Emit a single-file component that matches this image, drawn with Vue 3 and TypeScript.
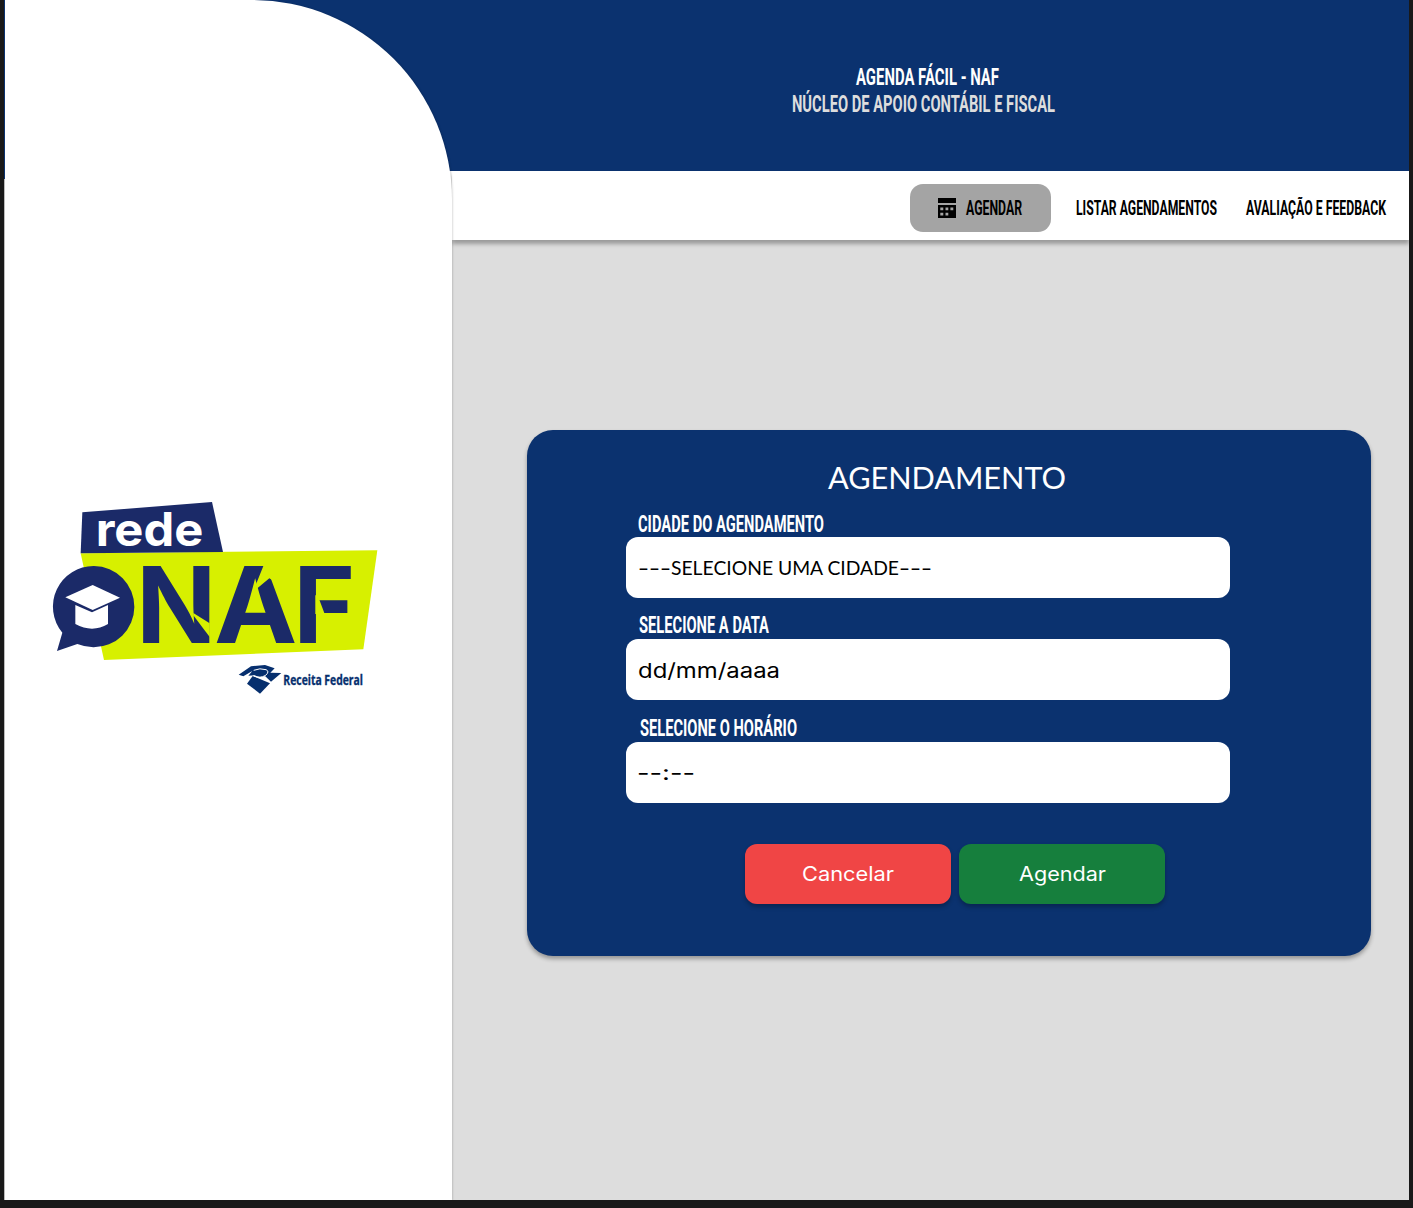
<script setup lang="ts">
import { h, ref } from 'vue'
import type { FunctionalComponent } from 'vue'

interface FitProps {
  text: string
  w: number
  cap: number
  size: number
}

// Single line of text whose box is exactly its cap height and fitted width.
const FitText: FunctionalComponent<FitProps> = (p) =>
  h('svg', { width: p.w, height: p.cap, style: { overflow: 'visible', display: 'block', flex: 'none' } }, [
    h('text', {
      x: 0,
      y: p.cap,
      'font-size': p.size,
      textLength: p.w,
      lengthAdjust: 'spacingAndGlyphs',
      fill: 'currentColor',
    }, p.text),
  ])
FitText.props = ['text', 'w', 'cap', 'size']

interface Part {
  text: string
  w: number
  size: number
  font: 'geo' | 'round'
}

interface Field {
  id: string
  label: string
  labelWidth: number
  parts: Part[]
}

const fields = ref<Field[]>([
  {
    id: 'cidade',
    label: 'CIDADE DO AGENDAMENTO',
    labelWidth: 186,
    parts: [
      { text: '---', w: 33, size: 19, font: 'geo' },
      { text: 'SELECIONE UMA CIDADE', w: 228, size: 19.8, font: 'round' },
      { text: '---', w: 33, size: 19, font: 'geo' },
    ],
  },
  { id: 'data', label: 'SELECIONE A DATA', labelWidth: 130, parts: [{ text: 'dd/mm/aaaa', w: 142, size: 20.4, font: 'geo' }] },
  { id: 'horario', label: 'SELECIONE O HORÁRIO', labelWidth: 157, parts: [{ text: '--:--', w: 58, size: 20.4, font: 'geo' }] },
])
</script>

<template>
  <div class="frame">
    <div class="window">
      <aside class="sidebar">
        <svg class="logo" width="350" height="220" viewBox="0 0 1050 660">
          <path fill="#d7f000" d="M122 190L1012 181L970 478L192 510Z" />
          <path fill="#1b2a68" d="M127 67L516 36L549 186L122 190Z" />
          <text class="rede" x="167" y="168" font-size="139" textLength="323" lengthAdjust="spacingAndGlyphs">rede</text>
          <path fill="#1b2a68" d="M162 228A122 122 0 1 1 160 472Q135 471 112 462L51 483L67 428A122 122 0 0 1 162 228Z" />
          <path fill="#fff" d="M76 322L158 285L240 323L158 360Z" />
          <path fill="#fff" d="M106 345L156 367L204 345V402Q157 430 106 402Z" />
          <g class="naf">
            <text x="289" y="458" textLength="240" lengthAdjust="spacingAndGlyphs">N</text>
            <text x="522" y="458" textLength="250" lengthAdjust="spacingAndGlyphs">A</text>
            <text x="760" y="458" textLength="186" lengthAdjust="spacingAndGlyphs">F</text>
          </g>
          <g fill="#d7f000">
            <path d="M460 369L509 400V441L460 376Z" />
            <path d="M671 226H705V275L688 265L652 295L640 303Z" />
            <path d="M826 316H833L854 372H826Z" />
          </g>
          <g fill="#062f6e">
            <path d="M596 554L633 529L675 525L704 535L691 548L724 549L693 575L675 558Q660 565 644 556L625 557L637 543L610 559Z" />
            <path d="M638 558L690 580L660 611L621 581Z" />
            <path d="M644 546Q659 536 676 546Q663 558 644 546Z" />
          </g>
          <path fill="none" stroke="#fff" stroke-width="3" d="M640 557Q658 567 677 556Q690 544 678 539Q660 533 641 541" />
          <text class="receita" x="730" y="584" font-size="40" textLength="239" lengthAdjust="spacingAndGlyphs">Receita Federal</text>
        </svg>
      </aside>

      <main class="main">
        <header class="header">
          <FitText class="display title" text="AGENDA FÁCIL - NAF" :w="143" :cap="16.5" :size="23.8" />
          <FitText class="display subtitle" text="NÚCLEO DE APOIO CONTÁBIL E FISCAL" :w="263" :cap="16.5" :size="23.8" />
        </header>

        <nav class="nav">
          <a class="nav-link active">
            <svg width="18" height="20" viewBox="0 0 18 20">
              <path
                fill="#000"
                fill-rule="evenodd"
                d="M0 0H18V5H0ZM0 7H18V20H0ZM2.3 9.6V12.2H5.3V9.6ZM7.5 9.6V12.2H10.3V9.6ZM12.4 9.6V12.2H15.3V9.6ZM2.3 14.7V17.4H5.3V14.7ZM7.5 14.7V17.4H10.3V14.7Z"
              />
            </svg>
            <FitText class="display" text="AGENDAR" :w="56" :cap="14" :size="19.8" />
          </a>
          <a class="nav-link"><FitText class="display" text="LISTAR AGENDAMENTOS" :w="141" :cap="14" :size="19.8" /></a>
          <a class="nav-link"><FitText class="display" text="AVALIAÇÃO E FEEDBACK" :w="140" :cap="14" :size="19.8" /></a>
        </nav>

        <section class="card">
          <FitText class="round heading" text="AGENDAMENTO" :w="238" :cap="22" :size="31.2" />
          <div class="fields">
            <div v-for="f in fields" :key="f.id" class="field" :class="f.id">
              <FitText class="display label" :text="f.label" :w="f.labelWidth" :cap="16.5" :size="23.8" />
              <div class="input">
                <FitText v-for="(p, i) in f.parts" :key="i" :class="p.font" :text="p.text" :w="p.w" :cap="14" :size="p.size" />
              </div>
            </div>
          </div>
          <div class="actions">
            <button type="button" class="btn cancel"><FitText class="geo" text="Cancelar" :w="92" :cap="14" :size="20" /></button>
            <button type="button" class="btn confirm"><FitText class="geo" text="Agendar" :w="87" :cap="14" :size="20" /></button>
          </div>
        </section>
      </main>
    </div>
  </div>
</template>

<style>
body {
  background: #191919;
}
</style>

<style scoped>
.frame {
  box-sizing: border-box;
  width: 1413px;
  height: 1208px;
  padding: 0 4px 8px;
  background: #191919;
  overflow: hidden;
}
.window {
  display: flex;
  width: 1405px;
  height: 1200px;
  overflow: hidden;
  background:
    linear-gradient(#0b326f 0 179px, #bbb 179px) 0 0 / 1px 100% no-repeat,
    linear-gradient(#0b326f 0 171px, #fff 171px 240px, #ddd 240px);
}
.sidebar {
  position: relative;
  z-index: 1;
  box-sizing: border-box;
  flex: none;
  width: 447px;
  margin-left: 1px;
  padding: 490px 0 0 35px;
  background: #fff;
  border-radius: 0 200px 0 0;
  box-shadow: 1px 0 2px rgba(0, 0, 0, 0.14);
  clip-path: inset(0 -4px 0 0);
}
.logo {
  display: block;
}
.rede {
  font-family: Inter, sans-serif;
  font-weight: 700;
  fill: #fff;
}
.naf {
  font-family: Inter, sans-serif;
  font-weight: 700;
  font-size: 316px;
  fill: #1b2a68;
}
.receita {
  font-family: 'Open Sans', sans-serif;
  font-weight: 700;
  fill: #062f6e;
  stroke: #062f6e;
  stroke-width: 1;
}
.main {
  flex: 1;
  min-width: 0;
}
.display {
  font-family: Roboto, sans-serif;
  font-weight: 700;
}
.round {
  font-family: Lato, sans-serif;
}
.geo {
  font-family: Inter, sans-serif;
}
.header {
  box-sizing: border-box;
  height: 171px;
  padding-top: 68px;
}
.title {
  margin-left: 404px;
  color: #fff;
}
.subtitle {
  margin: 10.8px 0 0 340px;
  color: #ddd;
}
.nav {
  box-sizing: border-box;
  display: flex;
  justify-content: flex-end;
  align-items: center;
  height: 69px;
  padding: 5px 23px 0 0;
  background: #fff;
  box-shadow: 0 4px 4px rgba(0, 0, 0, 0.3);
}
.nav-link {
  display: flex;
  align-items: center;
  height: 48px;
  padding-bottom: 1px;
  box-sizing: border-box;
  color: #000;
}
.nav-link + .nav-link {
  margin-left: 29px;
}
.nav-link.active {
  gap: 10px;
  width: 141px;
  padding: 0 0 0 28px;
  border-radius: 13px;
  background: #a4a4a4;
}
.nav-link.active .display {
  margin: -1px 0 0 -0.5px;
}
.nav-link.active + .nav-link {
  margin-left: 25px;
}
.card {
  box-sizing: border-box;
  width: 844px;
  height: 526px;
  margin: 190px 0 0 75px;
  padding-top: 37px;
  border-radius: 26px;
  background: #0b326f;
  box-shadow: 0 3px 4px rgba(0, 0, 0, 0.32);
}
.heading {
  margin-left: 301px;
  color: #fff;
}
.fields {
  margin: 26px 0 0 99px;
}
.label {
  margin: 0 0 5.5px 12px;
  color: #fff;
}
.field.data {
  margin-top: 18px;
}
.field.horario {
  margin-top: 19px;
}
.data .label {
  margin-bottom: 6.5px;
  margin-left: 13px;
}
.horario .label {
  margin-bottom: 6.5px;
  margin-left: 14px;
}
.input {
  box-sizing: border-box;
  display: flex;
  align-items: center;
  width: 604px;
  height: 61px;
  padding: 1px 12px 0 12px;
  border-radius: 12px;
  background: #fff;
  color: #000;
}
.data .input {
  padding: 2px 12px 0 11.5px;
}
.horario .input {
  padding-left: 11px;
}
.actions {
  display: flex;
  gap: 8px;
  margin: 41px 0 0 218px;
}
.btn {
  display: flex;
  align-items: center;
  justify-content: center;
  width: 206px;
  height: 60px;
  padding: 0;
  border: 0;
  border-radius: 12px;
  color: #fff;
  box-shadow: 0 3px 4px rgba(0, 0, 0, 0.26);
}
.cancel {
  background: #f04545;
}
.confirm {
  background: #167f3d;
}
</style>
